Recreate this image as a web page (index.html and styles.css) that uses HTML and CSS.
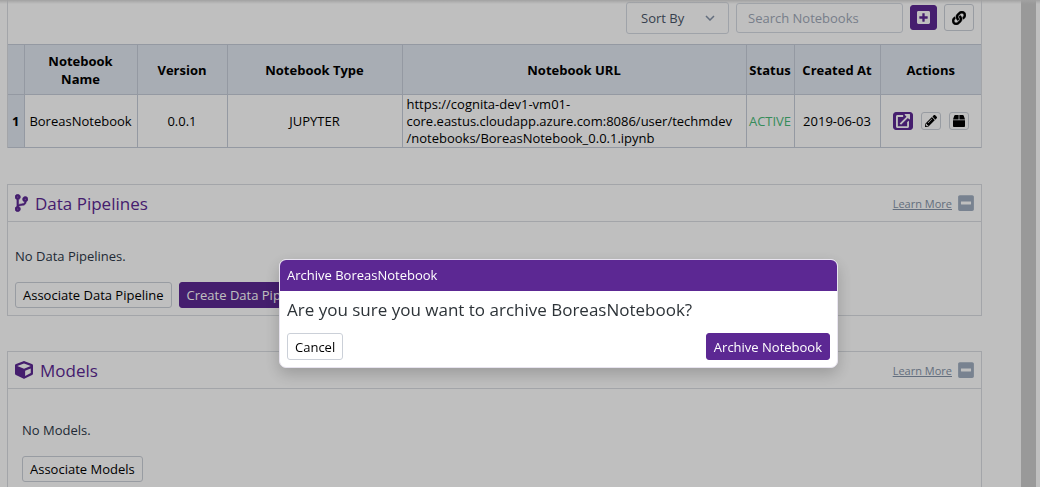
FILE: index.html
```html
<!DOCTYPE html>
<html lang="en">
<head>
<meta charset="utf-8">
<title>Notebooks</title>
<link rel="stylesheet" href="styles.css">
</head>
<body>
<svg class="sprite" aria-hidden="true">
  <symbol id="plus-square" viewBox="0 0 448 512"><path d="M400 32H48C21.500 32 0 53.500 0 80v352c0 26.500 21.500 48 48 48h352c26.500 0 48-21.500 48-48V80c0-26.500-21.500-48-48-48zm-32 252c0 6.600-5.400 12-12 12h-92v92c0 6.600-5.400 12-12 12h-56c-6.600 0-12-5.400-12-12v-92H92c-6.600 0-12-5.400-12-12v-56c0-6.600 5.400-12 12-12h92v-92c0-6.600 5.400-12 12-12h56c6.600 0 12 5.400 12 12v92h92c6.600 0 12 5.400 12 12v56z"/></symbol>
  <symbol id="minus-square" viewBox="0 0 448 512"><path fill-rule="evenodd" d="M400 32H48C21 32 0 53 0 80v352c0 27 21 48 48 48h352c27 0 48-21 48-48V80c0-27-21-48-48-48zM92 296c-7 0-12-5-12-12v-56c0-7 5-12 12-12h264c7 0 12 5 12 12v56c0 7-5 12-12 12z"/></symbol>
  <symbol id="link" viewBox="0 0 512 512"><path stroke="currentColor" stroke-width="16" d="M326.612 185.391c59.747 59.809 58.927 155.698.36 214.590-.110.120-.240.250-.360.370l-67.200 67.200c-59.270 59.270-155.699 59.262-214.960 0-59.270-59.260-59.270-155.700 0-214.960l37.106-37.106c9.840-9.840 26.786-3.300 27.294 10.606.648 17.722 3.826 35.527 9.690 52.721 1.986 5.822.567 12.262-3.783 16.612l-13.087 13.087c-28.026 28.026-28.905 73.660-1.155 101.960 28.024 28.579 74.086 28.749 102.325.510l67.200-67.190c28.191-28.191 28.073-73.757 0-101.830-3.701-3.694-7.429-6.564-10.341-8.569a16.037 16.037 0 0 1-6.947-12.606c-.396-10.567 3.348-21.456 11.698-29.806l21.054-21.055c5.521-5.521 14.182-6.199 20.584-1.731a152.482 152.482 0 0 1 20.522 17.197zM467.547 44.449c-59.261-59.262-155.690-59.270-214.960 0l-67.200 67.200c-.120.120-.250.250-.360.370-58.566 58.892-59.387 154.781.360 214.590a152.454 152.454 0 0 0 20.521 17.196c6.402 4.468 15.064 3.789 20.584-1.731l21.054-21.055c8.350-8.350 12.094-19.239 11.698-29.806a16.037 16.037 0 0 0-6.947-12.606c-2.912-2.005-6.640-4.875-10.341-8.569-28.073-28.073-28.191-73.639 0-101.830l67.200-67.190c28.239-28.239 74.300-28.069 102.325.510 27.750 28.300 26.872 73.934-1.155 101.960l-13.087 13.087c-4.350 4.350-5.769 10.790-3.783 16.612 5.864 17.194 9.042 34.999 9.690 52.721.509 13.906 17.454 20.446 27.294 10.606l37.106-37.106c59.271-59.259 59.271-155.699.001-214.959z"/></symbol>
  <symbol id="external" viewBox="0 0 512 512"><path d="M320 32h145c9 0 15 6 15 15v145c0 15-17 22-27 11l-42-42-218 218-44-44 218-218-50-50c-10-10-12-35 3-35zM80 64h180v60H92v296h296V290l60-40v182c0 27-21 48-48 48H80c-27 0-48-21-48-48V112c0-27 21-48 48-48z"/></symbol>
  <symbol id="pencil" viewBox="0 0 512 512"><path d="M497.900 142.100l-46.100 46.100c-4.700 4.700-12.300 4.700-17 0l-111-111c-4.700-4.700-4.700-12.300 0-17l46.100-46.100c18.700-18.700 49.100-18.700 67.900 0l60.100 60.100c18.800 18.700 18.800 49.100 0 68zM284.200 99.800L21.600 362.400.4 483.900c-2.900 16.400 11.400 30.600 27.800 27.800l121.500-21.300 262.600-262.600c4.700-4.700 4.700-12.300 0-17l-111-111c-4.800-4.700-12.400-4.700-17.100 0zM124.100 339.900c-5.500-5.500-5.500-14.300 0-19.800l154-154c5.500-5.500 14.300-5.500 19.800 0s5.500 14.300 0 19.800l-154 154c-5.500 5.500-14.300 5.500-19.800 0zM88 424h48v36.300l-64.500 11.300-31.100-31.100L51.700 376H88v48z"/></symbol>
  <symbol id="box" viewBox="0 0 512 512"><path d="M509.500 184.600L458.900 32.800C452.400 13.200 434.100 0 413.400 0H272v192h238.700c-.4-2.500-.4-5-1.200-7.400zM240 0H98.600c-20.700 0-39 13.200-45.500 32.800L2.500 184.600c-.8 2.400-.8 4.900-1.200 7.400H240V0zM0 224v240c0 26.500 21.500 48 48 48h416c26.500 0 48-21.500 48-48V224H0z"/></symbol>
  <symbol id="branch" viewBox="0 0 384 512"><path stroke="currentColor" stroke-width="16" d="M384 144c0-44.200-35.800-80-80-80s-80 35.800-80 80c0 36.400 24.300 67.100 57.500 76.800-.6 16.100-4.200 28.500-11 36.900-15.400 19.200-49.300 22.400-85.200 25.700-28.200 2.600-57.400 5.400-81.300 16.900v-144c32.500-10.200 56-40.500 56-76.300 0-44.200-35.800-80-80-80S0 35.800 0 80c0 35.800 23.500 66.100 56 76.300v199.300C23.500 365.900 0 396.200 0 432c0 44.200 35.800 80 80 80s80-35.800 80-80c0-34-21.200-63.100-51.200-74.600 3.100-5.200 7.800-9.800 14.900-13.400 16.200-8.200 40.400-10.400 66.100-12.800 42.200-3.900 90-8.400 118.200-43.400 14-17.400 21.100-39.800 21.600-67.900 31.600-10.800 54.400-40.700 54.400-75.900zM80 64c8.800 0 16 7.200 16 16s-7.200 16-16 16-16-7.200-16-16 7.200-16 16-16zm0 384c-8.800 0-16-7.200-16-16s7.200-16 16-16 16 7.200 16 16-7.200 16-16 16zm224-320c8.800 0 16 7.200 16 16s-7.200 16-16 16-16-7.200-16-16 7.200-16 16-16z"/></symbol>
  <symbol id="cube" viewBox="0 0 512 512"><path d="M239.100 6.300l-208 78c-18.700 7-31.100 25-31.100 45v225.100c0 18.200 10.300 34.800 26.500 42.900l208 104c13.500 6.800 29.400 6.800 42.900 0l208-104c16.300-8.100 26.500-24.800 26.500-42.900V129.300c0-20-12.400-37.900-31.100-44.900l-208-78C262 2.200 250 2.200 239.100 6.300zM256 68.400l192 72v1.100l-192 78-192-78v-1.100l192-72zm32 356V275.500l160-65v133.900l-160 80z"/></symbol>
</svg>

<div class="page">
  <main class="content">
    <section class="notebooks">
      <div class="toolbar">
        <select class="sort" aria-label="Sort By"><option>Sort By</option></select>
        <input class="search" type="text" placeholder="Search Notebooks" aria-label="Search Notebooks">
        <button class="btn primary tool-add" aria-label="Create notebook"><svg class="icon-m"><use href="#plus-square"/></svg></button>
        <button class="btn tool-link" aria-label="Associate notebook"><svg class="icon-l"><use href="#link"/></svg></button>
      </div>
      <table class="grid">
        <colgroup><col class="c-index"><col class="c-name"><col class="c-version"><col class="c-type"><col class="c-url"><col class="c-status"><col class="c-created"><col class="c-actions"></colgroup>
        <thead>
          <tr><th></th><th>Notebook Name</th><th>Version</th><th>Notebook Type</th><th>Notebook URL</th><th>Status</th><th>Created At</th><th>Actions</th></tr>
        </thead>
        <tbody>
          <tr>
            <th scope="row">1</th><td>BoreasNotebook</td><td>0.0.1</td><td>JUPYTER</td>
            <td class="url">https://cognita-dev1-vm01-<br>core.eastus.cloudapp.azure.com:8086/user/techmdev<br>/notebooks/BoreasNotebook_0.0.1.ipynb</td>
            <td class="active">ACTIVE</td><td>2019-06-03</td>
            <td><div class="actions">
              <button class="btn primary mini" aria-label="Open"><svg class="icon-open"><use href="#external"/></svg></button>
              <button class="btn mini" aria-label="Edit"><svg class="icon-s"><use href="#pencil"/></svg></button>
              <button class="btn mini" aria-label="Archive"><svg class="icon-s"><use href="#box"/></svg></button>
            </div></td>
          </tr>
        </tbody>
      </table>
    </section>

    <section class="panel">
      <header class="panel-head">
        <svg class="icon-branch"><use href="#branch"/></svg>
        <h2>Data Pipelines</h2>
        <a href="#">Learn More</a>
        <button class="collapse" aria-label="Collapse Data Pipelines"><svg><use href="#minus-square"/></svg></button>
      </header>
      <div class="panel-body">
        <p>No Data Pipelines.</p>
        <div class="buttons"><button class="btn">Associate Data Pipeline</button><button class="btn primary">Create Data Pipeline</button></div>
      </div>
    </section>

    <section class="panel">
      <header class="panel-head">
        <svg class="icon-cube"><use href="#cube"/></svg>
        <h2>Models</h2>
        <a href="#">Learn More</a>
        <button class="collapse" aria-label="Collapse Models"><svg><use href="#minus-square"/></svg></button>
      </header>
      <div class="panel-body inset">
        <p>No Models.</p>
        <div class="buttons"><button class="btn">Associate Models</button></div>
      </div>
    </section>
  </main>
  <div class="scroll-track"></div>
</div>

<div class="overlay">
  <div class="dialog" role="dialog" aria-modal="true" aria-labelledby="dialog-title">
    <h1 id="dialog-title">Archive BoreasNotebook</h1>
    <p>Are you sure you want to archive BoreasNotebook?</p>
    <div class="dialog-actions"><button class="btn">Cancel</button><button class="btn primary">Archive Notebook</button></div>
  </div>
</div>
</body>
</html>
```

FILE: styles.css
```css
* { box-sizing: border-box; }
body {
  margin: 0;
  height: 100vh;
  overflow: hidden;
  background: #fff;
  color: #2d3748;
  font: 13px/18px "Open Sans", "Noto Sans", sans-serif;
}
h1, h2, p { margin: 0; font-weight: 400; }
svg { display: block; fill: currentColor; }
.sprite { position: absolute; width: 0; height: 0; }
.page { display: flex; min-height: 100vh; }
.page::before {
  content: "";
  position: absolute;
  inset: 0 0 auto;
  height: 4px;
  background: linear-gradient(#d8d8d8, #fff0);
}
.content { flex: 1; padding: 0 39px 0 7px; }
.scroll-track { width: 15px; margin-right: 4px; background: #cdcdcd; }

.btn {
  height: 26px;
  padding: 0 7px;
  border: 1px solid #cbd0d8;
  border-radius: 3px;
  background: #fff;
  color: #000;
  font: inherit;
  white-space: nowrap;
}
.btn.primary { background: #5c2893; border-color: #5c2893; color: #fff; }

.notebooks { border-right: 1px solid #dadde2; border-left: 1px solid #dadde2; }
.toolbar { display: flex; justify-content: flex-end; align-items: center; height: 44px; padding: 0 7px 9px 0; }
.sort, .search {
  height: 32px;
  border: 1px solid #d5dae2;
  border-radius: 3px;
  background: #fff;
  font: inherit;
}
.sort {
  width: 103px;
  margin-right: 7px;
  padding: 0 14px;
  color: #4a5568;
  appearance: none;
  background: url("data:image/svg+xml,%3Csvg xmlns='http://www.w3.org/2000/svg' viewBox='0 0 10 6'%3E%3Cpath d='M1 1l4 4 4-4' fill='none' stroke='%238593a8' stroke-width='1.500'/%3E%3C/svg%3E") no-repeat right 13px center / 10px 6px;
}
.search { width: 167px; margin-right: 7px; padding: 0 11px; height: 30px; }
.search::placeholder { color: #a0a9b8; opacity: 1; }
.tool-add, .tool-link { display: grid; place-items: center; padding: 0; }
.tool-add { width: 27px; margin-right: 7px; height: 25px; }
.tool-link { width: 30px; height: 27px; }
.icon-m { width: 13px; height: 15px; }
.icon-l { width: 14px; height: 14px; }
.icon-s { width: 12px; height: 12px; }
.icon-open { width: 16px; height: 16px; }

.grid { width: 100%; table-layout: fixed; border-collapse: collapse; color: #000; text-align: center; }
.grid th, .grid td { padding: 0; border: 1px solid #c6cdd8; }
.grid tr > :first-child { border-left: 0; }
.grid tr > :last-child { border-right: 0; }
.grid th { background: #e0e7f0; font-weight: 700; }
.grid thead tr { height: 50px; }
.grid thead th { padding: 0 8px; }
.grid thead th:nth-child(6), .grid thead th:nth-child(7) { padding: 0; }
.grid tbody tr { height: 53px; }
.grid .url { padding: 0 4px; text-align: left; line-height: 17px; white-space: nowrap; }
.grid .active { color: #48bb78; }
.c-index { width: 16px; }
.c-name { width: 113px; }
.c-version { width: 90px; }
.c-type { width: 175px; }
.c-status { width: 48px; }
.c-created { width: 86px; }
.c-actions { width: 101px; }
.actions { display: flex; justify-content: center; gap: 8px; }
.mini { display: grid; place-items: center; width: 20px; height: 18px; padding: 0; }

.panel { margin-top: 36px; border: 1px solid #dadde2; }
.panel + .panel { margin-top: 35px; }
.panel-head { display: flex; align-items: center; height: 37px; padding: 0 7px; border-bottom: 1px solid #dadde2; }
.panel-head h2 { margin-left: 7px; margin-right: auto; padding-top: 2px; color: #5c2893; font-size: 17px; line-height: 24px; }
.panel-head > svg { color: #5c2893; }
.icon-branch { width: 13px; height: 18px; overflow: visible; }
.icon-cube { width: 18px; height: 18px; }
.panel-head a { color: #8593a8; font-size: 11px; padding-top: 2px; }
.collapse { margin-left: 6px; padding: 0; border: 0; background: none; color: #a0aec0; }
.collapse svg { width: 16px; height: 18px; }
.panel-body { padding: 25px 7px 7px; }
.panel-body.inset { padding: 32px 14px 14px; }
.panel-body p { margin-bottom: 17px; }
.buttons { display: flex; gap: 7px; }

.overlay { position: fixed; inset: 0; padding: 259px 202px 0 279px; background: #00000040; }
.dialog { overflow: hidden; border: 1px solid #e8e4ef; border-radius: 7px; background: #fff; box-shadow: 0 6px 16px #00000033; }
.dialog h1 { padding: 7px; background: #5c2893; color: #fff; font-size: 13px; line-height: 17px; }
.dialog p { padding: 7px; font-size: 17px; line-height: 24px; color: #2d3338; }
.dialog-actions { display: flex; justify-content: space-between; padding: 4px 7px 7px; }
.dialog-actions .btn { height: 27px; }
```
